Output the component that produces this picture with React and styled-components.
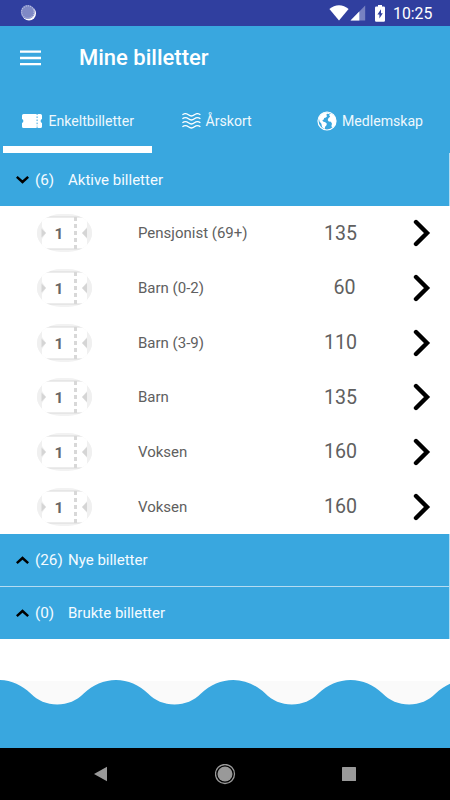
import styled, { createGlobalStyle } from "styled-components";

const GlobalStyle = createGlobalStyle`
  * { box-sizing: border-box; }
  body {
    margin: 0;
    background: #fff;
    font-family: Roboto, "Liberation Sans", sans-serif;
  }
`;

const Screen = styled.div`
  width: 450px;
  height: 800px;
  display: flex;
  flex-direction: column;
  overflow: hidden;
  background: #fff;
  svg { display: block; flex: none; }
`;
const StatusBar = styled.div`
  height: 26px;
  padding: 0 17px 0 20px;
  display: flex;
  align-items: center;
  background: #303f9f;
  color: #fff;
`;
const StatusIcons = styled.div`
  margin-left: auto;
  display: flex;
  align-items: center;
  gap: 1px;
`;
const BatteryWrap = styled.div`
  margin-left: 8px;
`;
const Clock = styled.span`
  width: 40px;
  margin-left: 7px;
  padding-top: 2px;
  font-size: 15.8px;
  line-height: 20px;
  white-space: nowrap;
`;
const AppBar = styled.header`
  height: 64px;
  padding: 0 0 1px 20px;
  display: flex;
  align-items: center;
  background: #39a7df;
`;
const Title = styled.h1`
  margin: 0 0 0 38px;
  color: #fff;
  font-size: 22px;
  font-weight: 500;
`;
const Tabs = styled.nav`
  height: 63px;
  display: grid;
  grid-template-columns: 154px 144px 152px;
  background: #39a7df;
`;
const Tab = styled.div`
  display: flex;
  flex-direction: column;
  padding: 0 3px;
`;
const TabLabel = styled.div`
  height: 56px;
  padding: 5px 0 0 ${(p) => p.$left}px;
  display: flex;
  align-items: center;
  color: #eef8fd;
  font-size: 14.1px;
  white-space: nowrap;
  svg { margin-right: ${(p) => p.$gap}px; }
`;
const Indicator = styled.div`
  height: 7px;
  width: 148.5px;
  background: #fff;
`;
const Section = styled.div`
  height: ${(p) => p.$height || 52}px;
  margin-bottom: ${(p) => p.$gap || 0}px;
  padding-left: 16px;
  display: flex;
  align-items: center;
  flex: none;
  background: #39a7df;
  border-right: 1px solid #b5dcf2;
  color: #f4fbff;
  font-size: 15px;
`;
const Count = styled.span`
  width: 33px;
  margin-left: 6px;
  font-size: 15.3px;
`;
const Sections = styled.div`
  background: #b5dcf2;
`;
const List = styled.div`
  height: 328px;
  display: grid;
  grid-template-rows: repeat(6, 1fr);
`;
const Row = styled.div`
  display: grid;
  grid-template-columns: 101px 171px 104px 1fr;
  align-items: center;
  padding-left: 37px;
  color: #606060;
`;
const Name = styled.span`
  font-size: 15px;
`;
const Price = styled.span`
  width: 63px;
  text-align: center;
  font-size: 19.6px;
  padding-left: ${(p) => (p.$short ? 8 : 0)}px;
`;
const Footer = styled.div`
  margin-top: auto;
`;
const NavBar = styled.div`
  height: 52px;
  padding: 0 94px 0 93px;
  display: flex;
  justify-content: space-between;
  align-items: center;
  background: #000;
`;

const tickets = [
  { name: "Pensjonist (69+)", price: 135 },
  { name: "Barn (0-2)", price: 60 },
  { name: "Barn (3-9)", price: 110 },
  { name: "Barn", price: 135 },
  { name: "Voksen", price: 160 },
  { name: "Voksen", price: 160 },
];

const Spinner = () => (
  <svg width="17" height="18" viewBox="0 0 17 18">
    <circle cx="9" cy="9.5" r="7" fill="#fff" />
    <circle cx="7.8" cy="8" r="7" fill="#7f89c5" />
    <circle cx="7.8" cy="8" r="6.2" fill="none" stroke="#b9c0e3" strokeWidth="1.2" strokeDasharray="1 1.2" />
  </svg>
);

const Wifi = () => (
  <svg width="20" height="16" viewBox="0 0 20 16">
    <path d="M.4 4.1C5.8-1 14.2-1 19.6 4.1L10 15.6z" fill="#fff" />
  </svg>
);

const Signal = () => (
  <svg width="16" height="16" viewBox="0 0 16 16">
    <path d="M15.2.4V15.6H.5z" fill="#7781c1" />
    <path d="M9.3 6.5v9.1H.5z" fill="#fff" />
  </svg>
);

const Battery = () => (
  <svg width="10" height="17" viewBox="0 0 10 17">
    <path d="M3 0h4v1.6h1.8q1.2 0 1.2 1.2v12.8q0 1.2-1.2 1.2H1.2Q0 16.8 0 15.6V2.8q0-1.2 1.2-1.2H3z" fill="#fff" />
    <path d="M6 4.3 2.4 9.6h2v4L7.8 8.2H6z" fill="#303f9f" />
  </svg>
);

const Menu = () => (
  <svg width="21" height="16" viewBox="0 0 21 16">
    <path d="M0 1.7h21M0 8h21M0 14.2h21" stroke="#fff" strokeWidth="2.3" />
  </svg>
);

const TicketIcon = () => (
  <svg width="20" height="14" viewBox="0 0 20 14">
    <path
      d="M1.6 0h12.6l.9 1.1L16 0h2.4Q20 0 20 1.5v3.6a2 2 0 0 0 0 3.8v3.6Q20 14 18.4 14H16l-.9-1.1-.9 1.1H1.6Q0 14 0 12.5V8.900a2 2 0 0 0 0-3.800V1.500Q0 0 1.600 0z"
      fill="#fff"
    />
    <path d="M15.1 2.4v10" stroke="#39a7df" strokeWidth="1" strokeDasharray="1.6 1.5" />
  </svg>
);

const Water = () => (
  <svg width="19" height="16" viewBox="0 0 19 16" fill="none" stroke="#fff" strokeWidth="1.3">
    {[1.8, 5.8, 9.8, 13.8].map((y) => (
      <path key={y} d={`M.4 ${y}c2.2-1.7 3.8-1.7 6 0s3.8 1.7 6 0 3.8-1.7 6 0`} />
    ))}
  </svg>
);

const Globe = () => (
  <svg width="20" height="20" viewBox="0 0 20 20">
    <circle cx="10" cy="10" r="9" fill="none" stroke="#fff" strokeWidth="1.2" />
    <path
      d="M1.8 6.8 4.6 2.8 8.7 1.2l4.2.4-.8 1.5-2-.3-.9 1.3 1 .8-1.2 1.5-1.8.7-.6 1.7-1.2.2.6 1.6 2.3.7 1.6 1.4-.6 1.8-1.2 1.3-.5 2.4L5 15.9l-.6-3.1-1.9-2.2z"
      fill="#fff"
    />
    <path
      d="M12.7 2.2 16 3.6l2.6 3.4.5 3.7-1.4 3.8-2.5 2.2-.8-1.7.6-2.3-1.1-2-2.2-.2-1-1.6.8-2 1.7-1.1-.9-1.2z"
      fill="#fff"
    />
  </svg>
);

const Caret = ({ up }) => (
  <svg width="13" height="9" viewBox="0 0 13 9">
    <path d={up ? "M.8 7.2 6.5 2l5.7 5.2" : "M.8 1.8 6.500 7l5.700-5.200"} fill="none" stroke="#000" strokeWidth="2.5" />
  </svg>
);

const Badge = () => (
  <svg width="56" height="38" viewBox="0 0 56 38">
    <clipPath id="pill">
      <rect width="55" height="38" rx="24" ry="19" />
    </clipPath>
    <g clipPath="url(#pill)">
      <rect width="55" height="38" fill="#f2f2f2" />
      <path d="M5 3h45v32H5z" fill="#fff" />
      <path d="M0 3h55M0 35h55" stroke="#dadada" strokeWidth="1.2" />
      <path d="M0 0v38h5V25l4-6-4-6V0zM55 0v38h-5V25l-5-6 5-6V0z" fill="#f0f0f0" />
      <path d="M4.5 14.5 9 19l-4.5 4.5zM50 14v10l-5-5z" fill="#d5d5d5" />
      <path d="M38.5 3v32" stroke="#d8d8d8" strokeWidth="3" strokeDasharray="4 3" />
    </g>
    <text x="22" y="25" textAnchor="middle" fontSize="15.5" fontWeight="700" fill="#666">1</text>
  </svg>
);

const Chevron = () => (
  <svg width="18" height="28" viewBox="0 0 18 28">
    <path d="m3 3 11 11L3 25" fill="none" stroke="#000" strokeWidth="4.4" strokeLinecap="round" />
  </svg>
);

const Waves = () => (
  <svg width="450" height="68" viewBox="0 0 450 68">
    <path d="M0 1h450v67H0z" fill="#fafafa" />
    <path
      d={
        "M-118.6 68V0" +
        "c12 0 23 5 32 13.5 7 7 16 11 26.5 11s19.500-4 26.500-11c9-8.500 20.300-13.500 32.300-13.500".repeat(5) +
        "V68z"
      }
      fill="#39a7df"
    />
  </svg>
);

const App = () => {
  return (
    <>
      <GlobalStyle />
      <Screen>
        <StatusBar>
          <Spinner />
          <StatusIcons>
            <Wifi />
            <Signal />
            <BatteryWrap>
              <Battery />
            </BatteryWrap>
            <Clock>10:25</Clock>
          </StatusIcons>
        </StatusBar>
        <AppBar>
          <Menu />
          <Title>Mine billetter</Title>
        </AppBar>
        <Tabs>
          <Tab>
            <TabLabel $left={19} $gap={6.5}>
              <TicketIcon />
              Enkeltbilletter
            </TabLabel>
            <Indicator />
          </Tab>
          <Tab>
            <TabLabel $left={25} $gap={4.5}>
              <Water />
              Årskort
            </TabLabel>
          </Tab>
          <Tab>
            <TabLabel $left={16} $gap={5}>
              <Globe />
              Medlemskap
            </TabLabel>
          </Tab>
        </Tabs>
        <Section $height={53}>
          <Caret />
          <Count>(6)</Count>
          Aktive billetter
        </Section>
        <List>
          {tickets.map((t, i) => (
            <Row key={i}>
              <Badge />
              <Name>{t.name}</Name>
              <Price $short={t.price < 100}>{t.price}</Price>
              <Chevron />
            </Row>
          ))}
        </List>
        <Sections>
          <Section $gap={1}>
            <Caret up />
            <Count>(26)</Count>
            Nye billetter
          </Section>
          <Section>
            <Caret up />
            <Count>(0)</Count>
            Brukte billetter
          </Section>
        </Sections>
        <Footer>
          <Waves />
          <NavBar>
            <svg width="15" height="16" viewBox="0 0 15 16">
              <path d="M14 .8v14.4L1 8z" fill="#999" />
            </svg>
            <svg width="21" height="21" viewBox="0 0 21 21">
              <circle cx="10" cy="10" r="9.5" fill="none" stroke="#999" strokeWidth="1.3" />
              <circle cx="10" cy="10" r="7.5" fill="#999" />
            </svg>
            <svg width="14" height="14" viewBox="0 0 14 14">
              <rect width="14" height="14" rx=".5" fill="#999" />
            </svg>
          </NavBar>
        </Footer>
      </Screen>
    </>
  );
};

export default App;
